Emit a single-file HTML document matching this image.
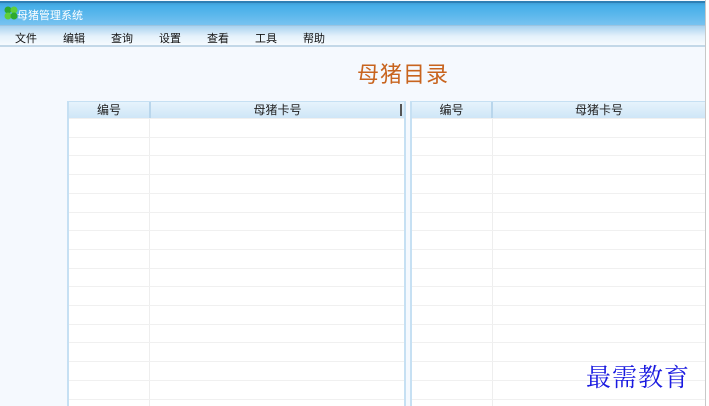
<html><head><style>
body{margin:0;width:709px;height:406px;overflow:hidden;background:#f5f9fe;font-family:"Liberation Sans","Noto Sans CJK SC",sans-serif;position:relative}
div{position:absolute;box-sizing:border-box}
.t{background:linear-gradient(#3f9fd8 0,#46aee9 3px,#5cb7ec 12px,#7dc5f1 24px);left:0;top:1px;width:705px;height:24px;border-top:2px solid #2d7fb5}
.m{left:0;top:25px;width:705px;height:22px;background:linear-gradient(#a8d2ef,#e4f1fb 10px,#f6fafe);border-top:1px solid #9cc4e0;border-bottom:2px solid #c3d8e8;font-size:11px;color:#111}
.m span{position:absolute;top:4px}
.tab{background:#fff;border-left:2px solid #c6e0f3;}
.hd{height:16px;background:linear-gradient(#e6f3fc,#cfe6f7);font-size:12px;color:#222;text-align:center;line-height:16px}
.row{height:1px;background:#f0f0f0}
</style></head><body>
<div class="t"><svg style="position:absolute;left:4px;top:3px" width="14" height="14"><circle cx="4" cy="4" r="3.5" fill="#2eaa2e"/><circle cx="10" cy="4" r="3.5" fill="#5ecf3a"/><circle cx="4" cy="10" r="3.5" fill="#5ecf3a"/><circle cx="10" cy="10" r="3.5" fill="#2eaa2e"/></svg><span style="position:absolute;left:17px;top:4px;font-size:11px;color:#fff">母猪管理系统</span></div>
<div class="m"><span style="left:15px">文件</span><span style="left:63px">编辑</span><span style="left:111px">查询</span><span style="left:159px">设置</span><span style="left:207px">查看</span><span style="left:255px">工具</span><span style="left:303px">帮助</span></div>
<div style="left:705px;top:0;width:4px;height:406px;background:#fff;border-left:1px solid #c8c8c8"></div>
<div style="left:357px;top:57px;font-size:22px;color:#c8641e;letter-spacing:1px">母猪目录</div>
<div class="tab" style="left:67px;top:101px;width:339px;height:305px;border-top:1px solid #c6e0f3;border-right:2px solid #c6e0f3"></div>
<div class="hd" style="left:69px;top:102px;width:80px">编号</div>
<div class="hd" style="left:149px;top:102px;width:255px;border-left:2px solid #b9d6ec">母猪卡号</div>
<div style="left:400px;top:104px;width:2px;height:12px;background:#555"></div>
<div style="left:149px;top:118px;width:1px;height:288px;background:#eeeeee"></div>
<div class="tab" style="left:410px;top:101px;width:295px;height:305px;border-top:1px solid #c6e0f3"></div>
<div class="hd" style="left:412px;top:102px;width:79px">编号</div>
<div class="hd" style="left:491px;top:102px;width:214px;border-left:2px solid #b9d6ec">母猪卡号</div>
<div style="left:492px;top:118px;width:1px;height:288px;background:#eeeeee"></div>
<div id="r"></div>
<script>
var h='';for(var i=0;i<16;i++){var y=118+Math.round(i*18.7);h+='<div class="row" style="left:69px;top:'+y+'px;width:335px"></div><div class="row" style="left:412px;top:'+y+'px;width:293px"></div>';}
document.getElementById('r').outerHTML=h;
</script>
<div style="left:586px;top:358px;font-size:25px;color:#1a1ae0;font-family:'Noto Serif CJK SC',serif;letter-spacing:1px">最需教育</div>
</body></html>
